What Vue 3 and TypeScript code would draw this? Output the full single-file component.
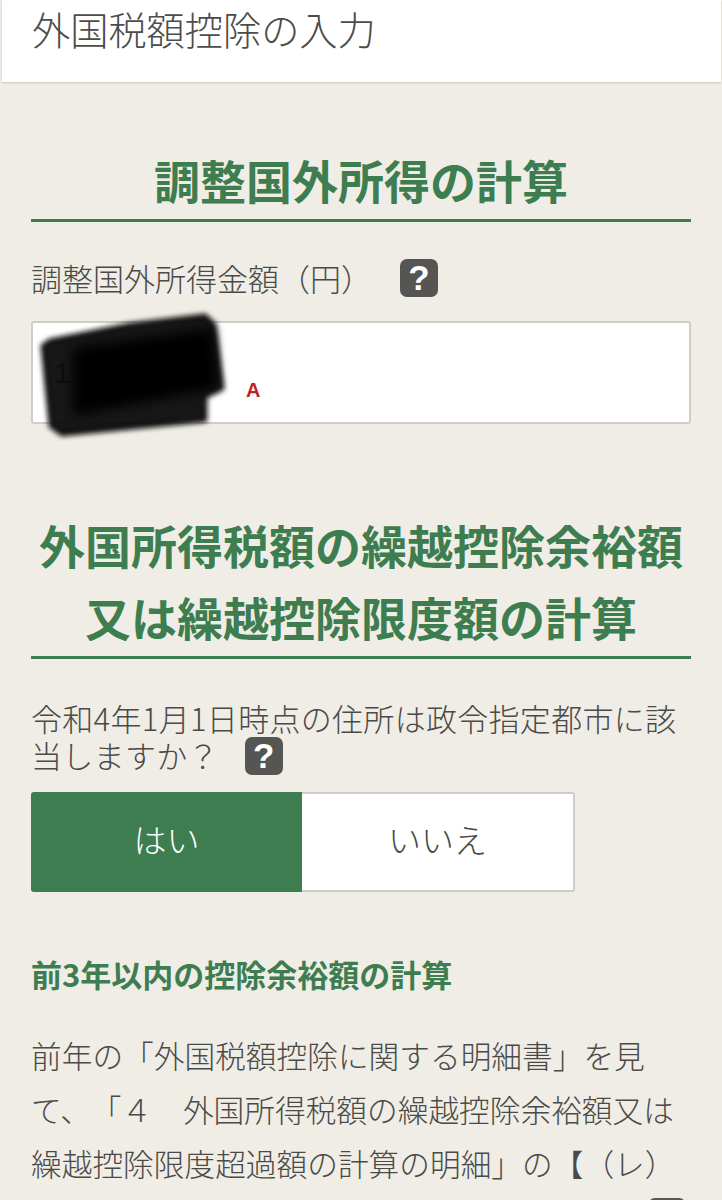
<script setup lang="ts">
const para: string = "前年の「外国税額控除に関する明細書」を見て、「４　外国所得税額の繰越控除余裕額又は繰越控除限度超過額の計算の明細」の【（レ）";
</script>

<template>
  <div class="page">
    <header class="top">
      <h1 class="title">外国税額控除の入力</h1>
    </header>

    <main class="content">
      <section class="first">
        <h2 class="heading">調整国外所得の計算</h2>
        <div class="label-row">
          <span class="label">調整国外所得金額（円）</span>
          <span class="help">?</span>
        </div>
        <div class="input">
          <span class="value">1</span>
          <span class="mark">A</span>
          <svg class="blot" width="230" height="150" viewBox="0 0 230 150" aria-hidden="true">
            <defs>
              <filter id="smudge" x="-10%" y="-10%" width="120%" height="120%">
                <feGaussianBlur stdDeviation="2.8" />
              </filter>
              <filter id="core" x="-20%" y="-20%" width="140%" height="140%">
                <feGaussianBlur stdDeviation="6" />
              </filter>
            </defs>
            <polygon
              filter="url(#smudge)"
              fill="#121212"
              fill-opacity="0.96"
              stroke="#121212"
              stroke-opacity="0.96"
              stroke-width="5"
              stroke-linejoin="round"
              points="22,46 29,41 109,25 184,16 193,25 201,88 184,96 184,120 41,134 30,126"
            />
            <polygon filter="url(#core)" fill="#000" points="52,48 192,28 196,88 52,116" />
          </svg>
        </div>
      </section>

      <section class="second">
        <h2 class="heading long">外国所得税額の繰越控除余裕額<br />又は繰越控除限度額の計算</h2>
        <p class="question">
          令和4年1月1日時点の住所は政令指定都市に該当しますか？<span class="help inline">?</span>
        </p>
        <div class="choice">
          <button class="opt on" type="button">はい</button>
          <button class="opt" type="button">いいえ</button>
        </div>
        <h3 class="sub">前3年以内の控除余裕額の計算</h3>
        <p class="para">{{ para }}</p>
        <div class="after-para"><span class="help"></span></div>
      </section>
    </main>
  </div>
</template>

<style scoped>
.page {
  height: 1200px;
  overflow: hidden;
  background: #efede5;
  color: #4a4a48;
  font-family: "Noto Sans CJK JP", "Noto Sans", sans-serif;
  text-spacing-trim: space-all;
}
.top {
  height: 82px;
  margin: 0 1px 0 2px;
  padding-left: 30px;
  background: #fff;
  box-shadow: 0 1px 2px rgba(0, 0, 0, 0.16);
  box-sizing: border-box;
}
.title {
  margin: 0;
  padding-top: 6px;
  font-size: 38.2px;
  line-height: 46px;
  font-weight: 300;
  color: #4c4c4a;
}
.content {
  padding: 0 31px;
}
.first {
  padding-top: 68px;
}
.heading {
  margin: 0;
  border-bottom: 3px solid #3d7d50;
  color: #3d7d50;
  font-size: 46px;
  line-height: 72px;
  font-weight: 700;
  text-align: center;
  white-space: nowrap;
}
.first .heading {
  line-height: 58px;
  padding-bottom: 11px;
}
.long {
  padding-bottom: 4px;
}
.label-row {
  display: flex;
  align-items: center;
  height: 38px;
  margin-top: 37px;
}
.label {
  font-size: 31px;
  line-height: 38px;
  font-weight: 300;
}
.help {
  display: inline-block;
  width: 38px;
  height: 38px;
  border-radius: 7px;
  background: #555553;
  color: #fff;
  font-family: "Liberation Sans Narrow", "Liberation Sans", sans-serif;
  font-size: 35px;
  font-weight: 700;
  line-height: 38px;
  letter-spacing: 0;
  text-align: center;
}
.label-row .help {
  margin-left: 28px;
}
.input {
  position: relative;
  display: flex;
  align-items: center;
  height: 103px;
  margin-top: 24px;
  padding-left: 21px;
  background: #fff;
  border: 2px solid #cfcdc5;
  border-radius: 3px;
  box-sizing: border-box;
}
.value {
  width: 17px;
  color: #000;
  font-family: "Liberation Sans", sans-serif;
  font-size: 30px;
}
.mark {
  margin: 36px 0 0 175px;
  color: #c3202c;
  font-family: "Liberation Sans", sans-serif;
  font-size: 20px;
  font-weight: 700;
}
.blot {
  position: absolute;
  left: -12px;
  top: -23px;
  overflow: visible;
}
.second {
  padding-top: 84px;
}
.question {
  margin: 40px 0 0;
  font-size: 31px;
  line-height: 37px;
  font-weight: 300;
  letter-spacing: 0.3px;
}
.help.inline {
  margin: -10px 0 -10px 26px;
  vertical-align: baseline;
}
.choice {
  display: flex;
  margin-top: 19px;
}
.opt {
  width: 273px;
  height: 100px;
  padding: 0 0 6px;
  background: #fff;
  border: 2px solid #cfcdc5;
  border-left: 0;
  border-radius: 0 3px 3px 0;
  color: #4a4a48;
  font-family: inherit;
  font-size: 33px;
  font-weight: 300;
}
.opt.on {
  width: 271px;
  background: #3d7d50;
  border: 0;
  border-radius: 3px 0 0 3px;
  color: #fff;
}
.sub {
  margin: 60px 0 0;
  color: #3d7d50;
  font-size: 31px;
  line-height: 44px;
  font-weight: 700;
}
.para {
  margin: 32px 0 0;
  font-size: 30.7px;
  line-height: 54px;
  font-weight: 300;
}
.after-para {
  display: flex;
  justify-content: flex-end;
  margin-top: 8px;
  padding-right: 5px;
}
</style>

<style>
html,
body {
  margin: 0;
  background: #efede5;
}
</style>
